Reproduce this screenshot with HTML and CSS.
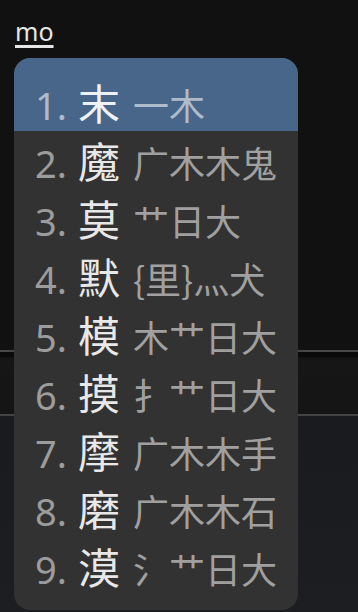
FILE: index.html
```html
<!DOCTYPE html>
<html>
<head>
    <link rel="stylesheet" href="styles.css">
</head>
<body>
    <div class="screen">
        <div class="editor"></div>
        <div class="tabbar"></div>
        <div class="panel"></div>

        <!-- IME composition + candidate window -->
        <div class="preedit">mo</div>
        <div class="candidates">
            <div class="cand active"><span class="num">1.</span><span class="word">末</span><span class="code">一木</span></div>
            <div class="cand"><span class="num">2.</span><span class="word">魔</span><span class="code">广木木鬼</span></div>
            <div class="cand"><span class="num">3.</span><span class="word">莫</span><span class="code">艹日大</span></div>
            <div class="cand"><span class="num">4.</span><span class="word">默</span><span class="code">{里}灬犬</span></div>
            <div class="cand"><span class="num">5.</span><span class="word">模</span><span class="code">木艹日大</span></div>
            <div class="cand"><span class="num">6.</span><span class="word">摸</span><span class="code">扌艹日大</span></div>
            <div class="cand"><span class="num">7.</span><span class="word">摩</span><span class="code">广木木手</span></div>
            <div class="cand"><span class="num">8.</span><span class="word">磨</span><span class="code">广木木石</span></div>
            <div class="cand"><span class="num">9.</span><span class="word">漠</span><span class="code">氵艹日大</span></div>
        </div>
    </div>
</body>
</html>
```

FILE: styles.css
```css
body {
    margin: 0;
    background-color: #111111;
    font-family: "Noto Sans", "Noto Sans CJK SC", sans-serif;
}

.screen {
    position: relative;
    width: 358px;
    height: 612px;
    overflow: hidden;
    display: flex;
    flex-direction: column;
}

.editor {
    height: 350px;
    background-color: #111111;
}

.tabbar {
    height: 62px;
    border-top: 2px solid #474747;
    border-bottom: 2px solid #434343;
    background: linear-gradient(#0a0a0a 0, #0a0a0a 5px, #161616 6px, #151515 100%);
}

.panel {
    flex: 1;
    background: linear-gradient(#1a1b1e, #1d1e22);
}

.preedit {
    position: absolute;
    left: 15px;
    top: 14px;
    font-size: 25px;
    line-height: 34px;
    color: #e6e6e6;
    text-decoration: underline;
    text-decoration-thickness: 3px;
    text-underline-offset: 4px;
}

.candidates {
    position: absolute;
    left: 14px;
    top: 58px;
    width: 284px;
    height: 552px;
    box-sizing: border-box;
    padding-bottom: 15px;
    background-color: #323232;
    border-radius: 16px;
    overflow: hidden;
}

.cand {
    display: flex;
    align-items: baseline;
    gap: 11px;
    height: 58px;
    padding-left: 21px;
    box-sizing: border-box;
    line-height: 58px;
}

.cand.active {
    height: 73px;
    padding-top: 15px;
    background-color: #48658a;
}

.num {
    font-size: 38px;
    color: #9c9c9c;
}

.word {
    font-family: "Noto Sans CJK SC", sans-serif;
    font-size: 42px;
    color: #e8e8e8;
}

.code {
    margin-left: 2px;
    font-family: "Noto Sans CJK SC", sans-serif;
    font-size: 36px;
    color: #a0a0a0;
}

.active .num {
    color: #aebbcb;
}

.active .word {
    color: #eef1f5;
}

.active .code {
    color: #aebbcb;
}
```
